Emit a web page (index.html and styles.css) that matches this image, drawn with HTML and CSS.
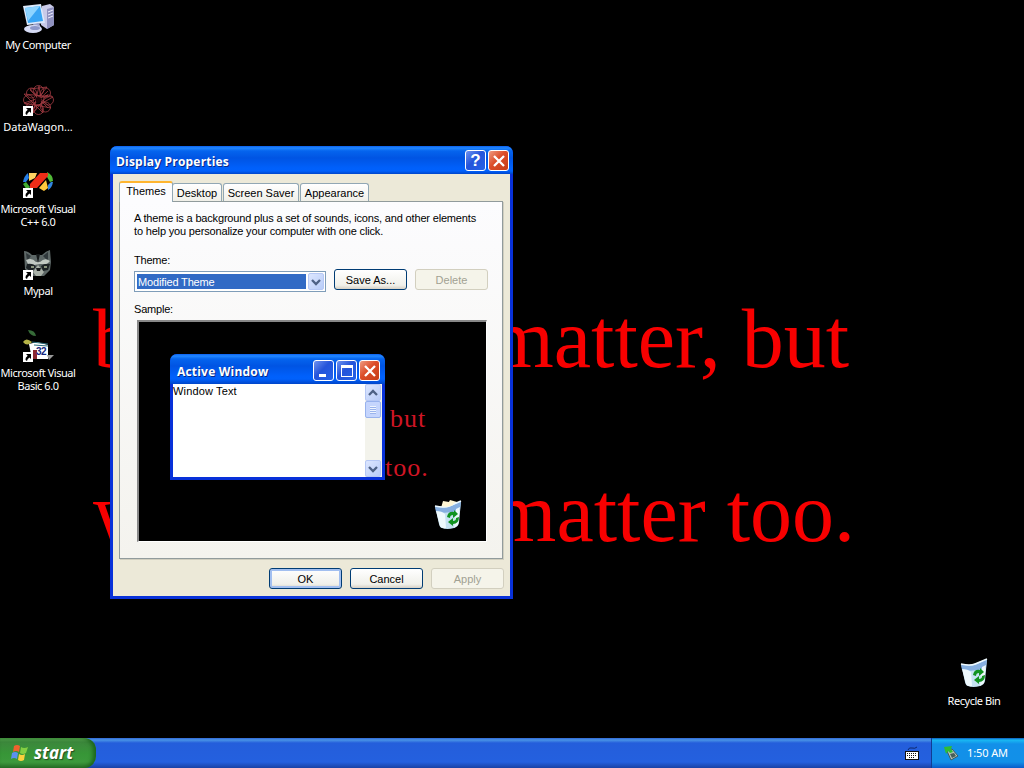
FILE: index.html
```html
<!DOCTYPE html>
<html lang="en">
<head>
    <meta charset="UTF-8">
    <title>Display Properties</title>
    <link rel="stylesheet" href="styles.css">
</head>
<body>
    <!-- shared icon shapes -->
    <svg class="defs" width="0" height="0">
        <symbol id="shortcut" viewBox="0 0 10 10">
            <rect width="10" height="10" fill="#fff"/>
            <path d="M3 2h5v5L6.500 5.500Q4 7 4 9L2.500 8Q2 5.500 4.700 3.700z" fill="#000"/>
        </symbol>
        <symbol id="bin" viewBox="0 0 32 32">
            <path d="M3 7q8 2 13 0T29 2l-2 22q-1 4-5 5-7 2-12 0-2 0-3-4z" fill="#c5e2f2"/>
            <path d="M3 7q9 3 14 1t12-6l-1 9q-10 4-24 2z" fill="#86afe0"/>
            <path d="M3 7q9 2 14 0t12-5" fill="none" stroke="#eefaff" stroke-width="1.500"/>
            <path d="M4 12q6 0 9 3l1 14q-4 1-6-2zM24 10l4-2-2 18-4 3z" fill="#eef9fd"/>
            <path d="M15 18q1-6 7-5v-2l4 4-5 4v-3q-3 0-3 3zM27 18q0 7-6 7v2l-5-4 5-4v3q3 0 3-3z" fill="#109320"/>
        </symbol>
        <symbol id="chevron" viewBox="0 0 10 8">
            <path d="M1 2l4 4 4-4" fill="none" stroke="#4d6185" stroke-width="2.300"/>
        </symbol>
        <symbol id="cross" viewBox="0 0 20 20">
            <path d="M5 5l10 10M15 5L5 15" stroke="#fff" stroke-width="2.300"/>
        </symbol>
    </svg>

    <div class="desktop">
        <div class="wallpaper">
            <p><span>b</span><span class="first">matter, but</span></p>
            <p><span>w</span><span class="second">matter too.</span></p>
        </div>

        <div class="icons">
            <div class="icon">
                <svg width="32" height="32" viewBox="0 0 32 32">
                    <path d="M20 4l8-2 4 3v18l-7 4-6-4z" fill="#c9cae8"/>
                    <path d="M25 7l7-2v18l-7 4z" fill="#8f91bf"/>
                    <path d="M26 10l5-2M26 13l5-2M26 16l5-2" stroke="#eef" stroke-width="1"/>
                    <path d="M1 4l18-2 4 19-18 2z" fill="#dce9fb"/>
                    <path d="M3 6l15-2 3 15-15 2z" fill="#38a5f4"/>
                    <path d="M3 6l15-2-12 15z" fill="#8dd4ff"/>
                    <path d="M11 22l6-1 2 5-6 1z" fill="#9da5d1"/>
                    <ellipse cx="11" cy="27" rx="9" ry="4" fill="#d7dcf5"/>
                    <ellipse cx="13" cy="26" rx="5" ry="2" fill="#8d98ca"/>
                </svg>
                <span>My Computer</span>
            </div>
            <div class="icon wide">
                <svg width="32" height="32" viewBox="0 0 32 32">
                    <g fill="none" stroke="#a33b43" stroke-width=".8">
                        <circle cx="16.500" cy="6.500" r="5"/>
                        <circle cx="23.500" cy="9" r="5"/>
                        <circle cx="26.500" cy="16" r="5"/>
                        <circle cx="23.500" cy="23" r="5"/>
                        <circle cx="16.500" cy="25.500" r="5"/>
                        <circle cx="9.500" cy="23" r="5"/>
                        <circle cx="6.500" cy="16" r="5"/>
                        <circle cx="9.500" cy="9" r="5"/>
                        <path d="M17 2l4 27L2 10l29 3L6 27 25 3 8 5l21 19-27-5 24-8L11 29z"/>
                        <path d="M8 6l18 18M26 7L8 24"/>
                    </g>
                    <circle cx="16.500" cy="16" r="3" fill="#190407"/>
                    <use href="#shortcut" x="1" y="22" width="10" height="10"/>
                </svg>
                <span>DataWagon...</span>
            </div>
            <div class="icon">
                <svg width="32" height="32" viewBox="0 0 32 32">
                    <path d="M1 16q1-6 5-9l1 5-3 4z" fill="#267ee6"/>
                    <path d="M1 18l3-2 4 5-3 3z" fill="#42ad31"/>
                    <path d="M7 7h8l-2 5-6 3z" fill="#ffd362"/>
                    <path d="M17 22l7-8 2 8-4 3z" fill="#ffc83c"/>
                    <path d="M25 6q6 3 6 9l-3 1-3-5z" fill="#51b937"/>
                    <path d="M31 16q-1 6-5 8v-5l3-3z" fill="#3185df"/>
                    <path d="M8 18L18 7h8v3L15 22H8z" fill="#ee2d18"/>
                    <use href="#shortcut" x="1" y="22" width="10" height="10"/>
                </svg>
                <span>Microsoft Visual<br>C++ 6.0</span>
            </div>
            <div class="icon">
                <svg width="32" height="32" viewBox="0 0 32 32">
                    <path d="M2 3q4 0 8 4h10q4-4 8-5l1 12-1 8-6 6H11L3 21z" fill="#5d6766"/>
                    <path d="M4 5l5 3-4 5zM26 4l-5 4 5 5z" fill="#30383b"/>
                    <path d="M4 12q6-3 10 2h4q5-5 10-1l-3 3-7 0-6 1-6-1z" fill="#c1c9c3"/>
                    <path d="M5 16q7-1 9 3l-5 5-5-4zM19 18q4-3 9-2l-2 6-5 1z" fill="#1c2225"/>
                    <path d="M11 24l5-7 6 7-3 4h-5z" fill="#a9b1a8"/>
                    <path d="M14 20h5l-1 3h-3zM14 6h4l-2 9z" fill="#15191a"/>
                    <path d="M9 18h3v2H9zM22 18h3v2h-3z" fill="#8a957f"/>
                    <use href="#shortcut" x="1" y="22" width="10" height="10"/>
                </svg>
                <span>Mypal</span>
            </div>
            <div class="icon">
                <svg width="32" height="32" viewBox="0 0 32 32">
                    <path d="M6 0q7 0 8 6-6 0-8-6z" fill="#366b38"/>
                    <path d="M1 12q3-5 9 0-5 5-9 0z" fill="#b6b447"/>
                    <path d="M7 14l8-2 11 3v14H10z" fill="#fff"/>
                    <path d="M10 12l16 2M12 15l14 1" stroke="#286a78"/>
                    <path d="M25 25h7l-5 5z" fill="#999"/>
                    <path d="M11 20h4v9h-4z" fill="#8c2730"/>
                    <text class="vb-number" x="14" y="25">32</text>
                    <use href="#shortcut" x="1" y="22" width="10" height="10"/>
                </svg>
                <span>Microsoft Visual<br>Basic 6.0</span>
            </div>
        </div>

        <div class="icon recycle">
            <svg width="32" height="32"><use href="#bin"/></svg>
            <span>Recycle Bin</span>
        </div>

        <div class="window">
            <div class="titlebar">
                <h1>Display Properties</h1>
                <button class="caption-btn help">?</button>
                <button class="caption-btn close"><svg width="20" height="20"><use href="#cross"/></svg></button>
            </div>
            <div class="window-body">
                <div class="tabs">
                    <div class="tab active">Themes</div>
                    <div class="tab desktop-tab">Desktop</div>
                    <div class="tab saver-tab">Screen Saver</div>
                    <div class="tab appearance-tab">Appearance</div>
                </div>
                <div class="panel">
                    <p class="intro">A theme is a background plus a set of sounds, icons, and other elements<br>to help you personalize your computer with one click.</p>
                    <div class="label">Theme:</div>
                    <div class="theme-row">
                        <div class="select">
                            <span>Modified Theme</span>
                            <i class="arrow"><svg width="10" height="8"><use href="#chevron"/></svg></i>
                        </div>
                        <button class="btn">Save As...</button>
                        <button class="btn disabled">Delete</button>
                    </div>
                    <div class="label sample-label">Sample:</div>
                    <div class="sample">
                        <span class="sample-word but">but</span>
                        <span class="sample-word too">too.</span>
                        <div class="mini">
                            <div class="titlebar">
                                <h2>Active Window</h2>
                                <button class="caption-btn"><svg width="20" height="20"><path d="M5 13h7v3H5z" fill="#fff"/></svg></button>
                                <button class="caption-btn"><svg width="20" height="20"><path d="M4 4h12v12H4zM5 7v8h10V7z" fill="#fff" fill-rule="evenodd"/></svg></button>
                                <button class="caption-btn close"><svg width="20" height="20"><use href="#cross"/></svg></button>
                            </div>
                            <div class="mini-body">
                                <span>Window Text</span>
                                <div class="scrollbar">
                                    <i class="arrow up"><svg width="10" height="8"><use href="#chevron"/></svg></i>
                                    <i class="thumb"></i>
                                    <i class="arrow down"><svg width="10" height="8"><use href="#chevron"/></svg></i>
                                </div>
                            </div>
                        </div>
                        <svg class="sample-bin" width="32" height="32" viewBox="0 0 32 32">
                            <path d="M9 9l2-7 6 1 1-2 7 2-2 8z" fill="#fff6d5"/>
                            <use href="#bin"/>
                            <path d="M10 7l2-4 5 1 1-2 4 1-1 3q-5 3-11 1z" fill="#fff6d5"/>
                        </svg>
                    </div>
                </div>
                <div class="actions">
                    <button class="btn default">OK</button>
                    <button class="btn">Cancel</button>
                    <button class="btn disabled">Apply</button>
                </div>
            </div>
        </div>
    </div>

    <div class="taskbar">
        <button class="start">
            <svg width="20" height="20" viewBox="0 0 20 20">
                <path d="M4 3q3-2 6 0L9 9Q6 7 3 9z" fill="#ef622e"/>
                <path d="M11 4q3 2 7 0l-2 6q-3 2-6 0z" fill="#83ce43"/>
                <path d="M2 10q3-2 6 0l-1 6q-3-2-6 0z" fill="#5b91ef"/>
                <path d="M9 11q3 2 6 0l-1 6q-3 2-6 0z" fill="#fbd03d"/>
            </svg>
            <span>start</span>
        </button>
        <svg class="keyboard" width="14" height="14" viewBox="0 0 14 14">
            <path d="M3 4q1-3 4-2t5-1" fill="none" stroke="#10296c"/>
            <path d="M0 5h14v9H0z" fill="#111"/>
            <path d="M1 6h12v7H1z" fill="#fff"/>
            <path d="M2 7.500h10M2 9.500h10M4 11.500h6" stroke="#111" stroke-dasharray="1 1"/>
        </svg>
        <div class="tray">
            <svg width="16" height="16" viewBox="0 0 16 16">
                <path d="M4 6l5-2 6 7-7 4z" fill="#b7c3bc" stroke="#405c59"/>
                <path d="M7 9l4-1 2 3-4 2z" fill="#475e57"/>
                <path d="M1 2l8-1-1 3 2 3-3 1-2-2-2 3z" fill="#2fbd32"/>
            </svg>
            <span>1:50 AM</span>
        </div>
    </div>
</body>
</html>
```

FILE: styles.css
```css
* {
    box-sizing: border-box;
}
body {
    margin: 0;
    width: 1024px;
    height: 768px;
    overflow: hidden;
    background: #000;
    display: flex;
    flex-direction: column;
    font-family: "Liberation Sans", Arial, sans-serif;
    font-size: 11px;
}
h1, h2, p {
    margin: 0;
}
button {
    font-family: inherit;
    font-size: inherit;
    padding: 0;
}
svg {
    display: block;
    flex: none;
}
.defs {
    position: absolute;
}
.desktop {
    position: relative;
    flex: 1;
}

/* wallpaper */
.wallpaper {
    position: absolute;
    left: 93px;
    top: 290px;
    width: 756px;
    color: #f80000;
    font-family: "Liberation Serif", "Times New Roman", serif;
    font-size: 84px;
    line-height: 98px;
}
.wallpaper p {
    display: flex;
    justify-content: space-between;
    height: 174px;
    white-space: nowrap;
}
.wallpaper .second {
    margin-right: -6px;
}

/* desktop icons */
.icons {
    display: flex;
    flex-direction: column;
    width: 76px;
    padding-top: 2px;
}
.icon {
    display: flex;
    flex-direction: column;
    align-items: center;
    gap: 4px;
    width: 76px;
    height: 82px;
    color: #fff;
    font-family: "Noto Sans", sans-serif;
    font-size: 11px;
    line-height: 13px;
    letter-spacing: -0.45px;
    text-align: center;
    white-space: nowrap;
}
.icon.wide {
    letter-spacing: 0;
}
.recycle {
    position: absolute;
    left: 936px;
    top: 657px;
    gap: 5px;
}
.vb-number {
    font: bold 10px "Liberation Sans", sans-serif;
    fill: #14267d;
}

/* windows */
.window {
    position: absolute;
    left: 110px;
    top: 146px;
    width: 403px;
    height: 453px;
    display: flex;
    flex-direction: column;
    padding: 0 3px 3px;
    background: #0831d9;
    border-radius: 7px 7px 0 0;
}
.titlebar {
    display: flex;
    align-items: center;
    gap: 2px;
    height: 28px;
    margin: 0 -3px;
    padding: 1px 4px 0 6px;
    border-radius: 7px 7px 0 0;
    background: linear-gradient(#0b60ee, #2187ff 2px, #0564ee 5px, #0054e3 12px, #0060fb 22px, #0061fc 25px, #0045c9);
    color: #fff;
}
.titlebar h1,
.titlebar h2 {
    flex: 1;
    padding-top: 1px;
    font-family: "Open Sans", sans-serif;
    font-size: 12px;
    font-weight: bold;
    letter-spacing: 0.2px;
    text-shadow: 1px 1px #0a2a85;
    white-space: nowrap;
}
.caption-btn {
    display: flex;
    align-items: center;
    justify-content: center;
    width: 21px;
    height: 21px;
    border: 1px solid #fff;
    border-radius: 3px;
    background: linear-gradient(135deg, #7093ef, #2454da 45%, #2562e8);
    color: #fff;
    overflow: hidden;
}
.help {
    font-size: 17px;
    font-weight: bold;
}
.close {
    background: linear-gradient(135deg, #ef9b82, #dc4d29 45%, #c63d17);
}
.window-body {
    flex: 1;
    display: flex;
    flex-direction: column;
    padding: 7px 6px 7px 6px;
    background: #ece9d8;
    color: #000;
}

/* tabs */
.tabs {
    display: flex;
    align-items: flex-end;
    gap: 1px;
    height: 20px;
    z-index: 1;
}
.tab {
    height: 18px;
    border: 1px solid #91a7b4;
    border-bottom: 0;
    border-radius: 3px 3px 0 0;
    background: linear-gradient(#fff, #f0efe8);
    line-height: 18px;
    text-align: center;
    white-space: nowrap;
}
.tab.active {
    width: 54px;
    height: 21px;
    margin-right: -2px;
    margin-bottom: -1px;
    border-top: 2px solid #ffb52f;
    background: #fcfcfe;
    line-height: 16px;
}
.desktop-tab { width: 50px; }
.saver-tab { width: 76px; }
.appearance-tab { width: 69px; }
.panel {
    width: 384px;
    height: 358px;
    padding: 10px 14px;
    border: 1px solid #919b9c;
    box-shadow: 1px 1px #d0cebf;
    background: linear-gradient(#fcfcfe, #f4f3ee);
}
.intro {
    line-height: 13px;
    letter-spacing: -0.17px;
    white-space: nowrap;
}
.label {
    height: 13px;
    margin-top: 16px;
    line-height: 13px;
    letter-spacing: -0.2px;
}
.theme-row {
    display: flex;
    gap: 8px;
    margin-top: 2px;
}
.select {
    display: flex;
    width: 192px;
    height: 21px;
    margin-top: 2px;
    padding: 1px;
    border: 1px solid #7f9db9;
    background: #fff;
}
.select span {
    flex: 1;
    margin: 1px 2px 1px 1px;
    padding-left: 1px;
    background: #316ac5;
    color: #fff;
    line-height: 16px;
    letter-spacing: -0.15px;
}
.arrow {
    display: flex;
    align-items: center;
    justify-content: center;
    width: 16px;
    height: 17px;
    border: 1px solid #b6c8f5;
    border-radius: 2px;
    background: linear-gradient(135deg, #dce6ff, #b8ccf8);
}
.btn {
    width: 73px;
    height: 21px;
    border: 1px solid #003c74;
    border-radius: 3px;
    background: linear-gradient(#fff, #f0f0ea 80%, #d6d0c5);
    color: #000;
}
.btn.default {
    box-shadow: inset 0 0 0 2px #a2bff0;
}
.btn.disabled {
    border-color: #d2cfbf;
    background: #f5f4ea;
    color: #a1a192;
}

/* theme preview */
.sample-label {
    margin-top: 11px;
}
.sample {
    position: relative;
    width: 350px;
    height: 222px;
    margin: 4px 0 0 3px;
    border: 2px solid #888;
    border-width: 2px 1px 1px 2px;
    border-right-color: #fff;
    border-bottom-color: #fff;
    background: #000;
}
.mini {
    position: absolute;
    left: 31px;
    top: 32px;
    width: 215px;
    height: 126px;
    padding: 0 3px 3px;
    border-radius: 7px 7px 0 0;
    background: #0831d9;
}
.mini .titlebar {
    height: 30px;
    padding: 3px 5px 0 7px;
}
.mini-body {
    display: flex;
    justify-content: space-between;
    height: 93px;
    background: #fff;
    line-height: 15px;
    letter-spacing: 0.15px;
}
.scrollbar {
    display: flex;
    flex-direction: column;
    width: 17px;
    background: #f3f3ec;
}
.up svg {
    transform: rotate(180deg);
}
.thumb {
    height: 17px;
    width: 16px;
    border: 1px solid #98b2ed;
    border-radius: 2px;
    background: repeating-linear-gradient(#eef4ff 0 1px, #9bb4ec 1px 2px) center / 6px 8px no-repeat, #c5d5fd;
}
.down {
    margin-top: auto;
}
.sample-word {
    position: absolute;
    color: #d01525;
    font-family: "Liberation Serif", "Times New Roman", serif;
    font-size: 26px;
    line-height: 28px;
    letter-spacing: 1px;
}
.but {
    left: 251px;
    top: 83px;
}
.too {
    left: 246px;
    top: 132px;
}
.sample-bin {
    position: absolute;
    left: 293px;
    top: 177px;
}
.actions {
    display: flex;
    justify-content: flex-end;
    gap: 8px;
    margin-top: auto;
}

/* taskbar */
.taskbar {
    display: flex;
    align-items: center;
    height: 30px;
    background: linear-gradient(#3168d5, #4993e6 2px, #245edb 5px, #2460df 24px, #1941a5);
    color: #fff;
}
.start {
    display: flex;
    align-items: center;
    gap: 4px;
    width: 96px;
    height: 30px;
    padding: 0 0 1px 10px;
    border: 0;
    border-radius: 0 12px 12px 0;
    background: linear-gradient(#5eac56, #3c873c 4px, #379637 16px, #3c993c 24px, #2b732b);
    box-shadow: inset -3px 0 4px #1b641b;
    color: #fff;
}
.start span {
    font-family: "Open Sans", sans-serif;
    font-size: 17px;
    font-style: italic;
    font-weight: bold;
    text-shadow: 1px 1px 1px #224a20;
}
.keyboard {
    margin-left: auto;
    margin-right: 12px;
}
.tray {
    display: flex;
    align-items: center;
    gap: 8px;
    width: 93px;
    height: 30px;
    padding: 0 0 1px 11px;
    border-left: 1px solid #103d94;
    background: linear-gradient(#0c59b9, #19b9f3 2px, #1290e9 6px, #1290e8 24px, #095bc9);
    font-family: "Noto Sans", sans-serif;
    letter-spacing: -0.1px;
}
```
